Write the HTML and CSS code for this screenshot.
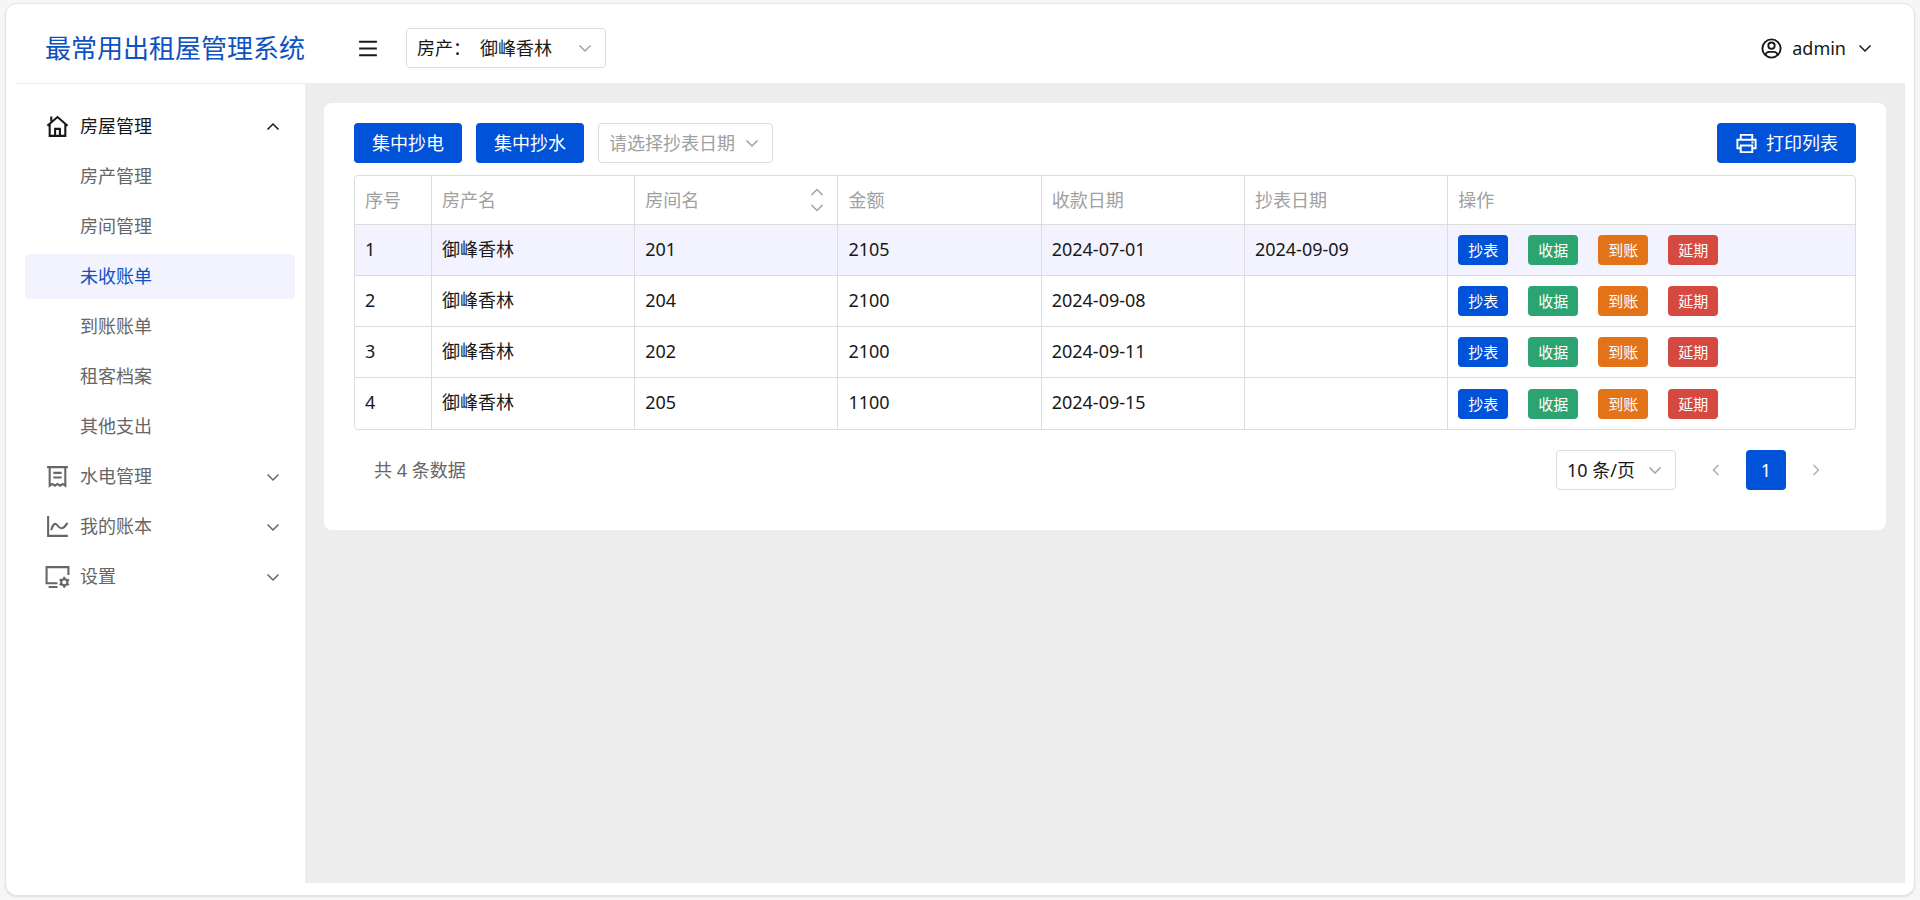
FILE: index.html
```html
<!DOCTYPE html>
<html lang="zh-CN">
<head>
<meta charset="utf-8">
<meta name="viewport" content="width=device-width, initial-scale=1">
<title>最常用出租屋管理系统</title>
<link rel="stylesheet" href="styles.css">
</head>
<body>
<svg class="sprite" aria-hidden="true">
  <symbol id="chevron-down" viewBox="0 0 20 20" preserveAspectRatio="xMidYMid slice"><path d="M4.500 7.500 10 13l5.500-5.500"/></symbol>
  <symbol id="chevron-up" viewBox="0 0 20 20" preserveAspectRatio="xMidYMid slice"><path d="M4.500 12.500 10 7l5.500 5.500"/></symbol>
  <symbol id="chevron-left" viewBox="0 0 20 20"><path d="M12.500 5 7.500 10l5 5"/></symbol>
  <symbol id="chevron-right" viewBox="0 0 20 20"><path d="M7.500 5l5 5-5 5"/></symbol>
  <symbol id="menu" viewBox="0 0 24 24"><path d="M3.500 5.500h17M3.500 12h17M3.500 18.500h17"/></symbol>
  <symbol id="user" viewBox="0 0 24 24"><circle cx="12" cy="12" r="9.500"/><circle cx="12" cy="9" r="3.300"/><path d="M5.500 18.800C6.300 16.300 8 15.500 9.500 15.500h5c1.500 0 3.200.8 4 3.300"/></symbol>
  <symbol id="home" viewBox="0 0 24 24"><path d="M2.300 11.200 12 2.900l9.700 8.300M4.500 9.800V21h15V9.800M9.700 21v-6.700h4.600V21M6 7V2.500"/></symbol>
  <symbol id="bill" viewBox="0 0 24 24"><path d="M2 3h20M4.500 3v17.800l2.500-1.700 2.500 1.700 2.500-1.700 2.500 1.700 2.500-1.700 2.500 1.700V3M8 8.500h8M8 13h8"/></symbol>
  <symbol id="chart" viewBox="0 0 24 24"><path d="M3 2v19h19M6 15.500c1.200-5.500 3.800-7.800 6-4.500 2.300 3.500 5.500 4.300 9.500-2.500"/></symbol>
  <symbol id="desktop" viewBox="0 0 24 24"><path d="M22.500 10.500V3h-21v15.500H12M3.500 22H12"/><circle cx="18.500" cy="17.500" r="3"/><path d="M18.500 12.300v2.200M18.500 20.500v2.200M14 14.900l1.900 1.100M21.100 19l1.900 1.100M14 20.100l1.900-1.100M21.100 16l1.900-1.100"/></symbol>
  <symbol id="print" viewBox="0 0 24 24"><path d="M6 8V3h12v5M6 17H2.500V8h19v9H18M6 14h12v7H6zM17.200 11h2"/></symbol>
</svg>
<div class="app">
  <header class="header">
    <h1 class="brand">最常用出租屋管理系统</h1>
    <button class="icon-button menu-button" type="button" aria-label="折叠菜单"><svg class="icon-lg"><use href="#menu"/></svg></button>
    <div class="select property-select">
      <label for="property">房产：</label>
      <select id="property"><option>御峰香林</option></select>
      <svg class="icon"><use href="#chevron-down"/></svg>
    </div>
    <button class="icon-button user-button" type="button"><svg class="icon-md"><use href="#user"/></svg><span>admin</span><svg class="icon"><use href="#chevron-down"/></svg></button>
  </header>
  <div class="body">
    <nav class="sidebar">
      <button class="nav-item nav-open" type="button" aria-expanded="true"><svg class="icon-lg"><use href="#home"/></svg><span>房屋管理</span><svg class="icon"><use href="#chevron-up"/></svg></button>
      <a class="nav-item nav-sub" href="#">房产管理</a>
      <a class="nav-item nav-sub" href="#">房间管理</a>
      <a class="nav-item nav-sub nav-active" href="#" aria-current="page">未收账单</a>
      <a class="nav-item nav-sub" href="#">到账账单</a>
      <a class="nav-item nav-sub" href="#">租客档案</a>
      <a class="nav-item nav-sub" href="#">其他支出</a>
      <button class="nav-item" type="button" aria-expanded="false"><svg class="icon-lg"><use href="#bill"/></svg><span>水电管理</span><svg class="icon"><use href="#chevron-down"/></svg></button>
      <button class="nav-item" type="button" aria-expanded="false"><svg class="icon-lg"><use href="#chart"/></svg><span>我的账本</span><svg class="icon"><use href="#chevron-down"/></svg></button>
      <button class="nav-item" type="button" aria-expanded="false"><svg class="icon-lg"><use href="#desktop"/></svg><span>设置</span><svg class="icon"><use href="#chevron-down"/></svg></button>
    </nav>
    <main class="main">
      <section class="card">
        <div class="toolbar">
          <button class="button" type="button">集中抄电</button>
          <button class="button" type="button">集中抄水</button>
          <div class="select date-select">
            <select aria-label="抄表日期"><option>请选择抄表日期</option></select>
            <svg class="icon"><use href="#chevron-down"/></svg>
          </div>
          <button class="button print-button" type="button"><svg class="icon-md"><use href="#print"/></svg>打印列表</button>
        </div>
        <div class="table-wrap">
          <table class="table">
            <colgroup><col class="col-index"><col class="col-data"><col class="col-data"><col class="col-data"><col class="col-data"><col class="col-data"><col></colgroup>
            <thead>
              <tr><th>序号</th><th>房产名</th><th><div class="sortable">房间名<button class="sorter" type="button" aria-label="按房间名排序"><svg class="icon"><use href="#chevron-up"/></svg><svg class="icon"><use href="#chevron-down"/></svg></button></div></th><th>金额</th><th>收款日期</th><th>抄表日期</th><th>操作</th></tr>
            </thead>
            <tbody>
              <tr class="row-active"><td>1</td><td>御峰香林</td><td>201</td><td>2105</td><td>2024-07-01</td><td>2024-09-09</td><td><div class="actions"><button class="tag" type="button">抄表</button><button class="tag tag-green" type="button">收据</button><button class="tag tag-orange" type="button">到账</button><button class="tag tag-red" type="button">延期</button></div></td></tr>
              <tr><td>2</td><td>御峰香林</td><td>204</td><td>2100</td><td>2024-09-08</td><td></td><td><div class="actions"><button class="tag" type="button">抄表</button><button class="tag tag-green" type="button">收据</button><button class="tag tag-orange" type="button">到账</button><button class="tag tag-red" type="button">延期</button></div></td></tr>
              <tr><td>3</td><td>御峰香林</td><td>202</td><td>2100</td><td>2024-09-11</td><td></td><td><div class="actions"><button class="tag" type="button">抄表</button><button class="tag tag-green" type="button">收据</button><button class="tag tag-orange" type="button">到账</button><button class="tag tag-red" type="button">延期</button></div></td></tr>
              <tr><td>4</td><td>御峰香林</td><td>205</td><td>1100</td><td>2024-09-15</td><td></td><td><div class="actions"><button class="tag" type="button">抄表</button><button class="tag tag-green" type="button">收据</button><button class="tag tag-orange" type="button">到账</button><button class="tag tag-red" type="button">延期</button></div></td></tr>
            </tbody>
          </table>
        </div>
        <div class="pagination">
          <span class="total">共 4 条数据</span>
          <div class="select size-select">
            <select aria-label="每页条数"><option>10 条/页</option></select>
            <svg class="icon"><use href="#chevron-down"/></svg>
          </div>
          <div class="pager">
            <button class="page" type="button" aria-label="上一页" disabled><svg class="icon"><use href="#chevron-left"/></svg></button>
            <button class="page page-current" type="button" aria-current="page">1</button>
            <button class="page" type="button" aria-label="下一页" disabled><svg class="icon"><use href="#chevron-right"/></svg></button>
          </div>
        </div>
      </section>
    </main>
  </div>
</div>
</body>
</html>
```

FILE: styles.css
```css
* { box-sizing: border-box; }

body {
  margin: 0;
  min-height: 100vh;
  padding: 3px 5px 4px;
  display: flex;
  background: #f6f6f6;
  color: #181818;
  font: 18px/28px "Noto Sans", "Noto Sans CJK SC", sans-serif;
}

button, select { font: inherit; color: inherit; }
button { margin: 0; padding: 0; border: 0; background: none; cursor: pointer; }

svg { fill: none; stroke: currentColor; stroke-width: 1.5; flex: none; }
.sprite { display: none; }
.icon { width: 20px; height: 20px; }
.icon-md { width: 23px; height: 23px; stroke-width: 2; }
.icon-lg { width: 25px; height: 25px; stroke-width: 2; }

.app {
  flex: 1;
  min-width: 0;
  display: flex;
  flex-direction: column;
  padding: 0 9px 12px;
  background: #fff;
  border: 1px solid #e4e4e4;
  border-radius: 12px;
  box-shadow: 0 1px 2px #0000001a;
}

/* Header */
.header {
  display: flex;
  align-items: center;
  padding: 24px 0 15px;
  border-bottom: 1px solid #ededed;
}
.brand {
  width: 340px;
  margin: 0;
  padding-left: 30px;
  color: #0e51c0;
  font-size: 26px;
  font-weight: 400;
  line-height: 40px;
}
.icon-button { display: flex; align-items: center; gap: 9px; }
.menu-button { margin-right: 25px; }
.menu-button .icon-lg { width: 26px; }
.user-button { margin-left: auto; padding-right: 30px; }

.select {
  display: flex;
  align-items: center;
  height: 40px;
  padding: 0 10px;
  border: 1px solid #dcdcdc;
  border-radius: 4px;
  background: #fff;
}
.select select {
  flex: 1;
  min-width: 0;
  padding: 0;
  border: 0;
  background: none;
  appearance: none;
}
.select .icon { color: #a0a0a0; pointer-events: none; }
.property-select { width: 200px; }
.property-select label { margin-right: 9px; }
.date-select { width: 175px; }
.date-select select { color: #a0a0a0; }
.size-select { width: 120px; }

/* Sidebar */
.body { flex: 1; display: flex; }
.sidebar {
  width: 290px;
  padding: 20px 10px;
  display: flex;
  flex-direction: column;
  gap: 5px;
}
.nav-item {
  display: flex;
  align-items: center;
  gap: 10px;
  height: 45px;
  padding: 0 12px 0 20px;
  border-radius: 4px;
  color: #666;
  text-decoration: none;
}
.nav-item span { padding-bottom: 2px; }
.nav-item .icon { margin-left: auto; }
.nav-open { color: #181818; }
.nav-sub { padding: 0 12px 2px 55px; }
.nav-active { background: #f2f3ff; color: #0e51c0; }

/* Content */
.main { flex: 1; min-width: 0; padding: 19px; background: #ededed; }
.card { padding: 20px 30px 40px; border-radius: 8px; background: #fff; }
.toolbar { display: flex; gap: 14px; margin-bottom: 12px; }
.button {
  display: flex;
  align-items: center;
  gap: 8px;
  height: 40px;
  padding: 0 18px;
  border-radius: 4px;
  background: #0052d9;
  color: #fff;
}
.print-button { margin-left: auto; }

.table-wrap { border: 1px solid #dcdcdc; border-radius: 4px; overflow: hidden; }
.table { width: 100%; table-layout: fixed; border-collapse: separate; border-spacing: 0; }
.col-index { width: 5.13%; }
.col-data { width: 13.55%; }
.table th, .table td {
  height: 51px;
  padding: 0 10px;
  border-right: 1px solid #dcdcdc;
  border-bottom: 1px solid #dcdcdc;
  text-align: left;
  font-weight: 400;
}
.table th { height: 49px; color: #a0a0a0; }
.table td { padding-bottom: 3px; }
.table th:last-child, .table td:last-child { padding-bottom: 0; border-right: 0; }
.table tbody tr:last-child td { border-bottom: 0; }
.row-active { background: #f2f3ff; }
.sortable { display: flex; align-items: center; justify-content: space-between; }
.sorter { display: flex; flex-direction: column; }
.sorter .icon { height: 15px; }
.actions { display: flex; gap: 20px; }
.tag {
  padding: 0 10px;
  border-radius: 4px;
  background: #0052d9;
  color: #fff;
  font-size: 15px;
  line-height: 30px;
}
.tag-green { background: #2ba471; }
.tag-orange { background: #e37318; }
.tag-red { background: #d54941; }

.pagination { display: flex; align-items: center; margin-top: 20px; }
.total { margin-right: auto; padding-left: 20px; color: #666; }
.pager { display: flex; gap: 10px; padding: 0 20px; }
.page {
  display: flex;
  align-items: center;
  justify-content: center;
  width: 40px;
  height: 40px;
  border-radius: 4px;
  color: #b0b0b0;
}
.page-current { background: #0052d9; color: #fff; }
```
